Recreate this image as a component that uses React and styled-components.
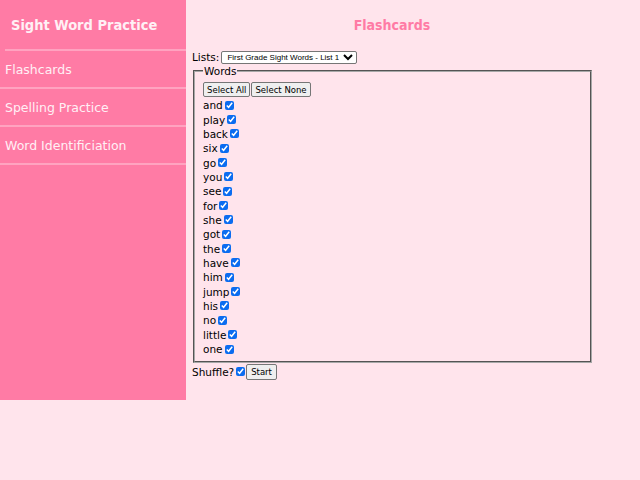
import React, { useState } from "react";
import styled, { createGlobalStyle } from "styled-components";

const words = [
  "and", "play", "back", "six", "go", "you", "see", "for", "she",
  "got", "the", "have", "him", "jump", "his", "no", "little", "one",
];

const GlobalStyle = createGlobalStyle`
  html, body {
    margin: 0;
    padding: 0;
    background: #ffe4ec;
  }
  body {
    font-family: "Comic Sans MS", "DejaVu Sans", sans-serif;
    font-size: 12px;
    color: #000;
  }
`;

const Page = styled.div`
  display: flex;
  align-items: flex-start;
  width: 640px;
  min-height: 480px;
`;

const Sidebar = styled.nav`
  width: 186px;
  height: 400px;
  background: #ff7ba5;
  flex-shrink: 0;
`;

const Brand = styled.h1`
  margin: 0 0 0 5px;
  height: 49px;
  padding-left: 6px;
  display: flex;
  align-items: center;
  font-family: "Comic Sans MS", "DejaVu Sans Condensed", "DejaVu Sans", sans-serif;
  font-size: 14.5px;
  font-weight: bold;
  color: #fff0f5;
  border-bottom: 2px solid #ffa3c0;
`;

const NavItem = styled.a`
  display: flex;
  align-items: center;
  height: 36px;
  padding-left: 5px;
  font-size: 12.5px;
  color: #fff0f5;
  text-decoration: none;
  border-bottom: 2px solid #ffa3c0;
`;

const Main = styled.main`
  width: 400px;
  margin-left: 6px;
  display: flex;
  flex-direction: column;
`;

const Heading = styled.h2`
  margin: 17px 0 0;
  height: 20px;
  text-align: center;
  font-family: "Comic Sans MS", "DejaVu Sans Condensed", "DejaVu Sans", sans-serif;
  font-size: 14px;
  font-weight: bold;
  color: #ff7ba5;
`;

const ListRow = styled.label`
  margin-top: 13px;
  display: flex;
  align-items: center;
  gap: 2px;
  font-size: 10.5px;
  height: 14px;
`;

const Select = styled.select`
  font-family: "Liberation Sans", Arial, sans-serif;
  font-size: 8px;
  height: 13px;
  padding: 0 1px;
  border: 1px solid #767676;
  border-radius: 2px;
  background: #fff;
`;

const Fieldset = styled.fieldset`
  margin: 1px 0 0 1px;
  padding: 2px 8px 5px;
  border: 2px groove #c0c0c0;
  border-color: #a8a8a8;
  display: flex;
  flex-direction: column;
`;

const Legend = styled.legend`
  padding: 0 1px;
  font-size: 10.5px;
  line-height: 12px;
`;

const Buttons = styled.div`
  display: flex;
  gap: 1px;
  margin: 3px 0 1px;
`;

const Button = styled.button`
  font-family: inherit;
  font-size: 8.5px;
  height: 15px;
  padding: 0 3px;
  border: 1px solid #767676;
  border-radius: 2px;
  background: #efefef;
  color: #000;
`;

const StartButton = styled(Button)`
  margin-left: 1px;
  height: 16px;
  padding: 0 4px;
`;

const WordRow = styled.label`
  display: flex;
  align-items: center;
  height: 14.35px;
  font-size: 10.5px;
`;

const Check = styled.input.attrs({ type: "checkbox" })`
  width: 9px;
  height: 9px;
  margin: 0 0 0 2px;
  accent-color: #0b6cf0;
`;

const Footer = styled.div`
  display: flex;
  align-items: center;
  font-size: 10.5px;
  height: 17px;
`;

export default function App() {
  const [checked, setChecked] = useState(() => words.map(() => true));
  const [shuffle, setShuffle] = useState(true);

  const toggle = (i) =>
    setChecked((c) => c.map((v, j) => (j === i ? !v : v)));

  return (
    <>
      <GlobalStyle />
      <Page>
        <Sidebar>
          <Brand>Sight Word Practice</Brand>
          <NavItem href="#">Flashcards</NavItem>
          <NavItem href="#">Spelling Practice</NavItem>
          <NavItem href="#">Word Identificiation</NavItem>
        </Sidebar>
        <Main>
          <Heading>Flashcards</Heading>
          <ListRow>
            Lists:
            <Select defaultValue="1">
              <option value="1">First Grade Sight Words - List 1</option>
            </Select>
          </ListRow>
          <Fieldset>
            <Legend>Words</Legend>
            <Buttons>
              <Button onClick={() => setChecked(words.map(() => true))}>
                Select All
              </Button>
              <Button onClick={() => setChecked(words.map(() => false))}>
                Select None
              </Button>
            </Buttons>
            {words.map((w, i) => (
              <WordRow key={w}>
                {w}
                <Check checked={checked[i]} onChange={() => toggle(i)} />
              </WordRow>
            ))}
          </Fieldset>
          <Footer>
            Shuffle?
            <Check checked={shuffle} onChange={() => setShuffle(!shuffle)} />
            <StartButton>Start</StartButton>
          </Footer>
        </Main>
      </Page>
    </>
  );
}
